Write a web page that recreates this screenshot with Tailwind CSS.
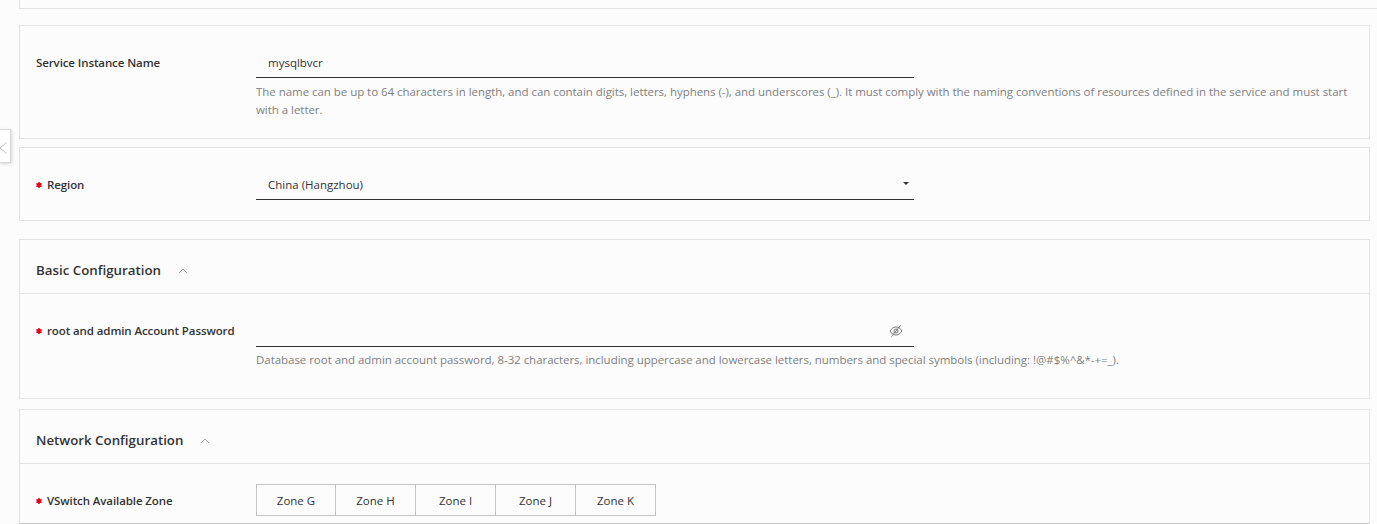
<!DOCTYPE html>
<html lang="en">
<head>
<meta charset="utf-8">
<script src="https://cdn.jsdelivr.net/npm/@tailwindcss/browser@4"></script>
</head>
<body class="m-0 bg-[#fcfcfc] font-['Open_Sans','Noto_Sans',sans-serif] text-[11.5px] text-[#333]">
<div class="relative h-[524px] w-[1377px] overflow-hidden pl-[19px] pr-[7px]">

  <div class="-mr-[7px] h-[9px] border-b border-l border-[#e3e3e3]"></div>

  <section class="mt-[16px] flex h-[114px] border border-[#e3e3e3] pl-[16px]">
    <div class="w-[220px] pt-[28px] font-semibold leading-[18px] tracking-[-0.1px]">Service Instance Name</div>
    <div class="flex-1 pt-[24px] pr-[8px]">
      <div class="h-[28px] w-[658px] border-b border-[#333] pl-[12px] leading-[26px]">mysqlbvcr</div>
      <p class="mt-[5px] leading-[18px] tracking-[-0.04px] text-[#808080]">The name can be up to 64 characters in length, and can contain digits, letters, hyphens (-), and underscores (_). It must comply with the naming conventions of resources defined in the service and must start with a letter.</p>
    </div>
  </section>

  <section class="mt-[8px] flex h-[74px] border border-[#e3e3e3] pl-[16px]">
    <div class="flex w-[220px] items-center self-start pt-[28px] font-semibold leading-[18px] tracking-[-0.1px]">
      <svg class="mr-[5px]" width="6" height="6" viewBox="0 0 6 6" stroke="#e60012" stroke-width="1.500"><path d="M3 0v6M.4 1.500l5.200 3M.4 4.500l5.200-3"/></svg>Region</div>
    <div class="pt-[24px]">
      <div class="relative h-[28px] w-[658px] border-b border-[#333] pl-[12px] leading-[26px]">China (Hangzhou)
        <span class="absolute right-[5px] top-[10px] h-0 w-0 border-x-[3px] border-t-[3px] border-x-transparent border-t-[#333]"></span>
      </div>
    </div>
  </section>

  <section class="mt-[18px] h-[160px] border border-[#e3e3e3]">
    <header class="flex h-[54px] items-center border-b border-[#e3e3e3] pl-[16px] pt-[8px] text-[13.3px] font-semibold">
      Basic Configuration
      <svg class="ml-[17px]" width="10" height="6" viewBox="0 0 10 6" fill="none" stroke="#aaa"><path d="M1 5l4-4 4 4"/></svg>
    </header>
    <div class="flex pl-[16px]">
      <div class="flex w-[220px] items-center self-start pt-[28px] font-semibold leading-[18px] tracking-[-0.1px]">
        <svg class="mr-[5px]" width="6" height="6" viewBox="0 0 6 6" stroke="#e60012" stroke-width="1.500"><path d="M3 0v6M.4 1.500l5.200 3M.4 4.500l5.200-3"/></svg>root and admin Account Password</div>
      <div class="pt-[25px]">
        <div class="relative h-[28px] w-[658px] border-b border-[#333]">
          <svg class="absolute right-[11px] top-[6px]" width="14" height="12" viewBox="0 0 14 12" fill="none" stroke="#777"><path d="M1 6c1.500-2.500 3.500-4 6-4s4.500 1.500 6 4c-1.500 2.500-3.500 4-6 4S2.500 8.500 1 6z"/><circle cx="7" cy="6" r="2"/><path d="M2.500 11.500L11.500.5"/></svg>
        </div>
        <p class="mt-[4px] leading-[18px] tracking-[-0.04px] text-[#808080]">Database root and admin account password, 8-32 characters, including uppercase and lowercase letters, numbers and special symbols (including: !@#$%^&amp;*-+=_).</p>
      </div>
    </div>
  </section>

  <section class="mt-[10px] h-[115px] border-x border-t border-b border-x-[#e3e3e3] border-t-[#e3e3e3] border-b-[#c4c4c4]">
    <header class="flex h-[54px] items-center border-b border-[#e3e3e3] pl-[16px] pt-[8px] text-[13.3px] font-semibold">
      Network Configuration
      <svg class="ml-[17px]" width="10" height="6" viewBox="0 0 10 6" fill="none" stroke="#aaa"><path d="M1 5l4-4 4 4"/></svg>
    </header>
    <div class="flex pl-[16px]">
      <div class="flex w-[220px] items-center self-start pt-[28px] font-semibold leading-[18px] tracking-[-0.1px]">
        <svg class="mr-[5px]" width="6" height="6" viewBox="0 0 6 6" stroke="#e60012" stroke-width="1.500"><path d="M3 0v6M.4 1.500l5.200 3M.4 4.500l5.200-3"/></svg>VSwitch Available Zone</div>
      <div class="mt-[20px] flex h-[32px] border border-[#c4c4c4]">
        <div class="flex w-[79px] items-center justify-center border-r border-[#c4c4c4] pt-[1px]">Zone G</div>
        <div class="flex w-[80px] items-center justify-center border-r border-[#c4c4c4] pt-[1px]">Zone H</div>
        <div class="flex w-[80px] items-center justify-center border-r border-[#c4c4c4] pt-[1px]">Zone I</div>
        <div class="flex w-[80px] items-center justify-center border-r border-[#c4c4c4] pt-[1px]">Zone J</div>
        <div class="flex w-[79px] items-center justify-center pt-[1px]">Zone K</div>
      </div>
    </div>
  </section>

  <button class="absolute left-[-1px] top-[129px] flex h-[34px] w-[12px] items-center justify-start border border-[#d8d8d8] bg-white shadow-[1px_1px_3px_rgba(0,0,0,0.15)]" aria-label="Collapse">
    <svg class="ml-[-1px] mt-[4px]" width="8" height="12" viewBox="0 0 8 12" fill="none" stroke="#bbb"><path d="M7 1L1 6l6 5"/></svg>
  </button>
</div>
</body>
</html>
